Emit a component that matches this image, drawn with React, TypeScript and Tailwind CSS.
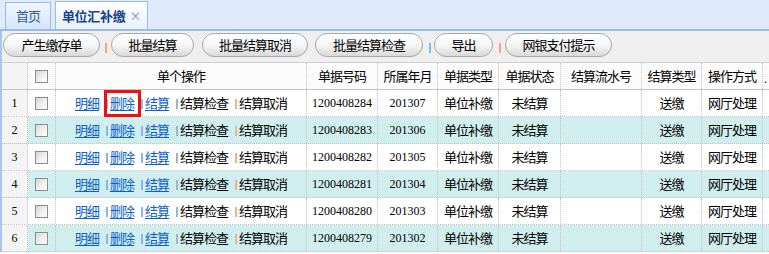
import React from "react";

const cjk = "font-['Noto_Sans_CJK_SC',sans-serif]";
const serif = "font-['Liberation_Serif','Noto_Sans_CJK_SC',serif]";

const grid =
  "grid grid-cols-[26px_28px_251px_71px_60px_61px_62px_81px_60px_61px_1fr]";
const cell =
  "border-r border-dotted border-[#c4c4c4] flex items-center justify-center overflow-hidden whitespace-nowrap";

function Pill({ w, children }: { w: number; children: React.ReactNode }) {
  return (
    <div
      style={{ width: w }}
      className="h-[24px] rounded-full border border-[#a9a9a9] bg-gradient-to-b from-white via-[#f6f6f6] to-[#d9d9d9] flex items-center justify-center text-[13px] tracking-[-1px] text-black shrink-0"
    >
      {children}
    </div>
  );
}

function ToolSep({ color }: { color: string }) {
  return <div style={{ background: color }} className="w-[2px] h-[10px] mt-[10px] shrink-0" />;
}

function Check() {
  return (
    <div className="w-[13px] h-[13px] border border-[#8c8c8c] bg-gradient-to-br from-[#d6d6d6] via-[#eeeeee] to-white" />
  );
}

function Sep({ color }: { color: string }) {
  return (
    <span
      style={{ background: color }}
      className="ml-[7px] mr-[2px] w-[2px] h-[10px] translate-y-[1px] shrink-0"
    />
  );
}

function A({ children }: { children: React.ReactNode }) {
  return <span className="text-[#0a5fcc] underline underline-offset-2">{children}</span>;
}

export default function App() {
  const rows = [0, 1, 2, 3, 4, 5];
  return (
    <div className={`w-[769px] h-[254px] overflow-hidden bg-white text-black ${cjk}`}>
      {/* Tab bar */}
      <div className="h-[31px] bg-[#dfebfc] border-b-2 border-[#99bbe8] flex items-end pl-[5px] gap-[4px]">
        <div className="w-[46px] h-[27px] border border-b-0 border-[#99bbe8] bg-gradient-to-b from-[#f0f6fe] to-[#d6e5f8] flex items-center justify-center text-[13px] tracking-[-1px] text-[#2f5d9c]">
          首页
        </div>
        <div className="w-[93px] h-[28px] border border-b-0 border-[#99bbe8] bg-gradient-to-b from-white to-[#e9f1fc] flex items-center justify-center gap-[4px] text-[13px] font-bold tracking-[-0.3px] text-[#15428b]">
          <span>单位汇补缴</span>
          <span className="text-[#6b90cc] font-normal text-[12px]">×</span>
        </div>
      </div>

      <div className="border-l-2 border-[#a8c6ee]">
        {/* Toolbar */}
        <div className="h-[31px] bg-[#efefef] flex items-start pt-[2px] pl-[1px]">
          <Pill w={97}>产生缴存单</Pill>
          <div className="ml-[5px] mr-[4px] flex">
            <ToolSep color="#f2a877" />
          </div>
          <Pill w={83}>批量结算</Pill>
          <div className="w-[8px]" />
          <Pill w={106}>批量结算取消</Pill>
          <div className="w-[7px]" />
          <Pill w={108}>批量结算检查</Pill>
          <div className="ml-[6px] mr-[3px] flex">
            <ToolSep color="#7fc2e8" />
          </div>
          <Pill w={59}>导出</Pill>
          <div className="ml-[6px] mr-[4px] flex">
            <ToolSep color="#f2a877" />
          </div>
          <Pill w={107}>网银支付提示</Pill>
        </div>

        {/* Table */}
        <div className="text-[13px] tracking-[-1px]">
          <div className={`${grid} h-[28px] border-t border-b border-[#d0d0d0] border-b-[#c4c4c4] border-b-dotted bg-[#fcfcfc]`}>
            <div className={`${cell} bg-[#f4f4f4]`} />
            <div className={cell}>
              <Check />
            </div>
            <div className={cell}>单个操作</div>
            <div className={cell}>单据号码</div>
            <div className={cell}>所属年月</div>
            <div className={cell}>单据类型</div>
            <div className={cell}>单据状态</div>
            <div className={cell}>结算流水号</div>
            <div className={cell}>结算类型</div>
            <div className={cell}>操作方式</div>
            <div className="flex items-center justify-start pl-[1px] overflow-hidden whitespace-nowrap text-[11px] tracking-normal translate-y-[2px]">.</div>
          </div>

          {rows.map((i) => (
            <div
              key={i}
              className={`${grid} h-[27px] border-b border-dotted border-[#c4c4c4] ${
                i % 2 === 1 ? "bg-[#d0eeee]" : "bg-white"
              }`}
            >
              <div className={`${cell} bg-[#f4f4f4] ${serif} text-[12px] tracking-normal`}>{i + 1}</div>
              <div className={cell}>
                <Check />
              </div>
              <div className={`${cell} overflow-visible`}>
                <div className="flex items-center h-full">
                  <A>明细</A>
                  <Sep color="#8ab8e6" />
                  <span className="relative h-full flex items-center">
                    <A>删除</A>
                    {i === 0 && (
                      <span className="absolute top-0 -bottom-[1px] -left-[6px] -right-[7px] border-[3px] border-[#ee1111]" />
                    )}
                  </span>
                  <Sep color="#8ab8e6" />
                  <A>结算</A>
                  <Sep color="#9ab4d4" />
                  <span>结算检查</span>
                  <Sep color="#f0b28c" />
                  <span>结算取消</span>
                </div>
              </div>
              <div className={`${cell} ${serif} text-[12px] tracking-normal`}>{1200408284 - i}</div>
              <div className={`${cell} ${serif} text-[12px] tracking-normal`}>{201307 - i}</div>
              <div className={cell}>单位补缴</div>
              <div className={cell}>未结算</div>
              <div className={cell} />
              <div className={cell}>送缴</div>
              <div className={cell}>网厅处理</div>
              <div />
            </div>
          ))}
        </div>
      </div>
    </div>
  );
}
